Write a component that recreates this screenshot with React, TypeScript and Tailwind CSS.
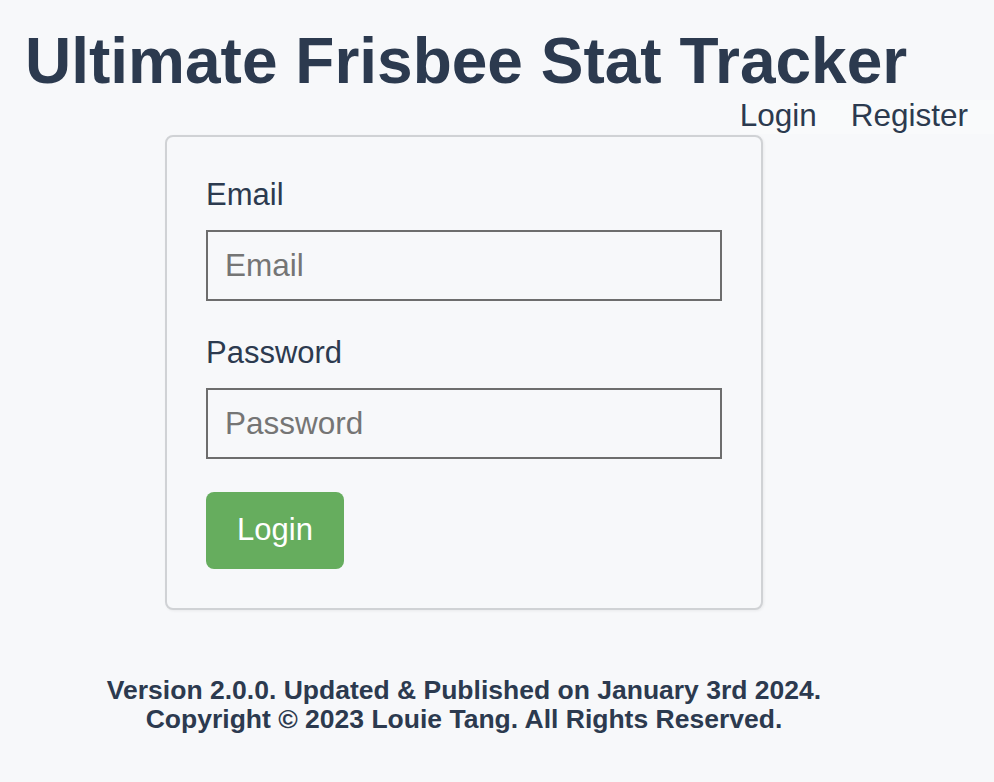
export default function App() {
  return (
    <div className="min-h-screen bg-[#f7f8fa] text-[#2c3a4f] font-['Liberation_Sans',Arial,sans-serif]">
      <header className="flex flex-col">
        <h1 className="mt-[29px] pl-[25px] text-[64px] font-bold leading-none">
          Ultimate Frisbee Stat Tracker
        </h1>
        <nav className="mt-[7px] self-end bg-[#f9fafb] pr-[26px] pb-[2px]">
          <ul className="flex gap-[34px] text-[31.5px] leading-none">
            <li>
              <a href="#">Login</a>
            </li>
            <li>
              <a href="#">Register</a>
            </li>
          </ul>
        </nav>
      </header>

      <main className="w-[928px]">
        <form className="mx-auto mt-[1px] flex w-[598px] flex-col rounded-[8px] border-2 border-[#d0d2d5] bg-[#f7f8fa] pt-[42px] pr-[39px] pb-[39px] pl-[39px] shadow-[1px_1px_3px_rgba(0,0,0,0.06)]">
          <label htmlFor="email" className="text-[31px] leading-none">
            Email
          </label>
          <input
            id="email"
            type="email"
            placeholder="Email"
            className="mt-[20px] h-[71px] w-full border-2 border-[#6d6d6d] bg-[#f7f8fa] pl-[17px] text-[31.5px] placeholder:text-[#757575] outline-none"
          />
          <label htmlFor="password" className="mt-[36px] text-[31px] leading-none">
            Password
          </label>
          <input
            id="password"
            type="password"
            placeholder="Password"
            className="mt-[20px] h-[71px] w-full border-2 border-[#6d6d6d] bg-[#f7f8fa] pl-[17px] text-[31.5px] placeholder:text-[#757575] outline-none"
          />
          <button
            type="button"
            className="mt-[33px] h-[77px] w-[138px] rounded-[8px] bg-[#66ad5e] text-[31px] text-white"
          >
            Login
          </button>
        </form>

        <footer className="mt-[66px] text-center text-[26.5px] font-bold leading-[29px]">
          <p>Version 2.0.0. Updated &amp; Published on January 3rd 2024.</p>
          <p>Copyright © 2023 Louie Tang. All Rights Reserved.</p>
        </footer>
      </main>
    </div>
  );
}
